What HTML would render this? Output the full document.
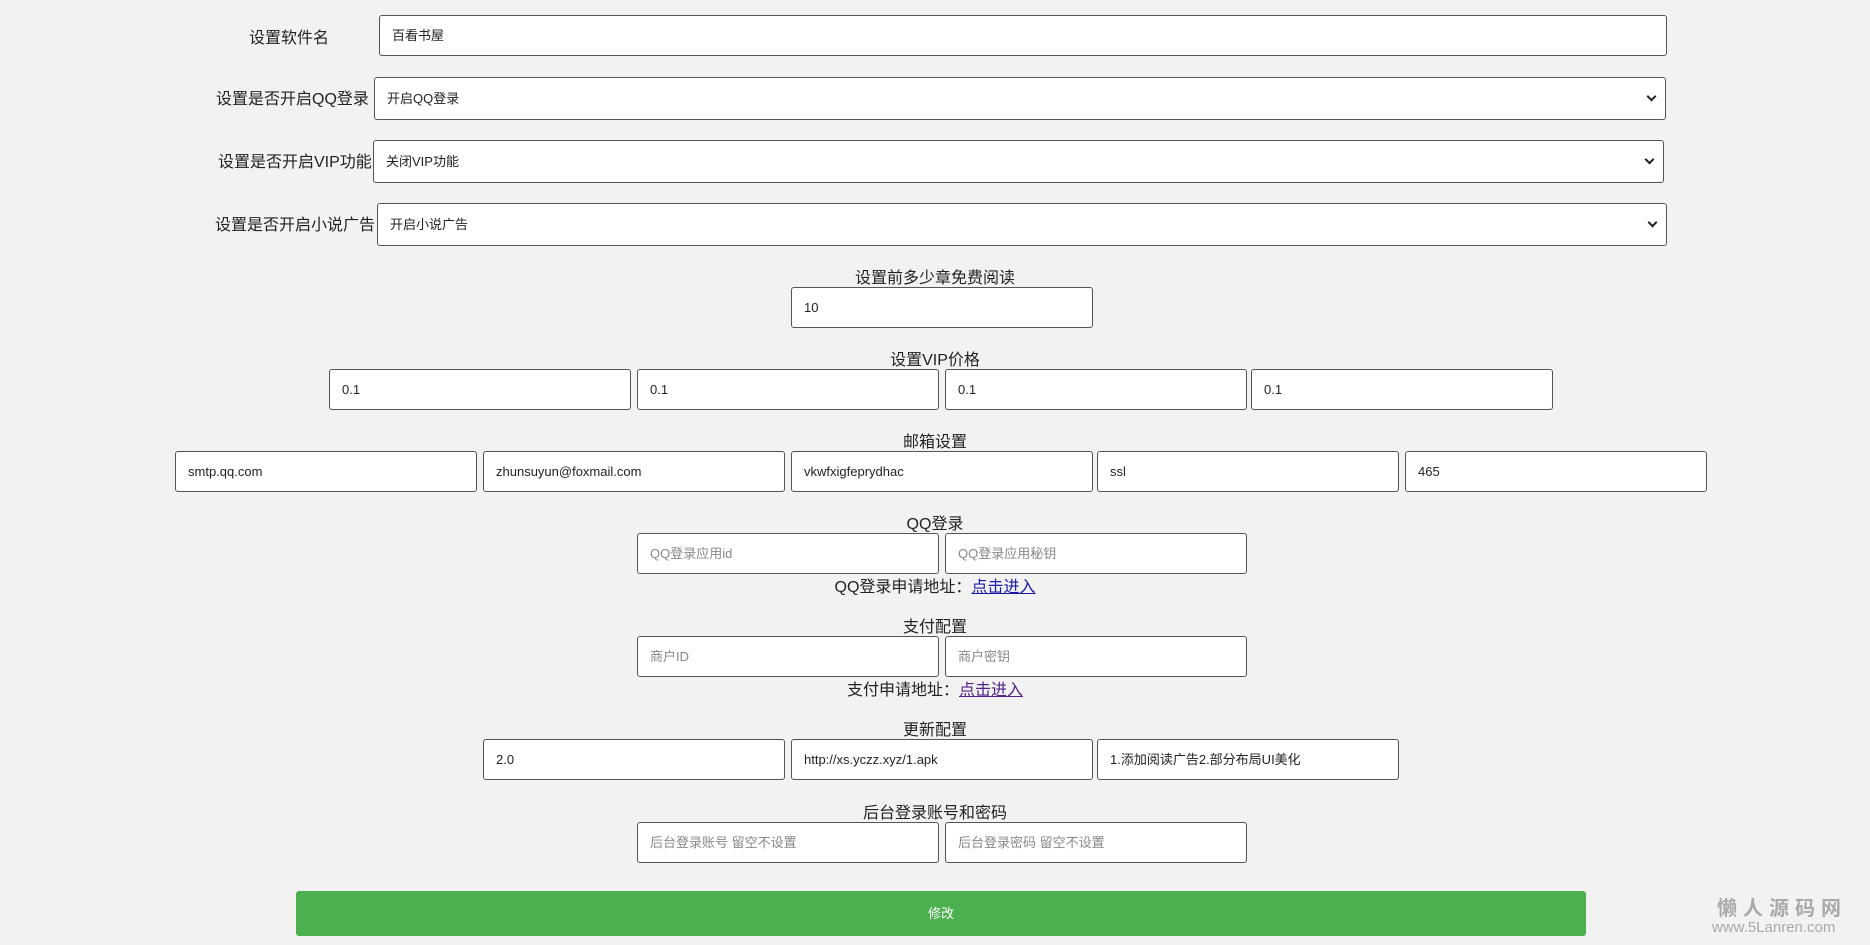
<!DOCTYPE html>
<html><head><meta charset="utf-8"><style>
body{margin:0;width:1870px;height:945px;background:#f2f2f2;font-family:"Liberation Sans","Noto Sans CJK SC",sans-serif;position:relative;overflow:hidden;color:#222}
.i{position:absolute;box-sizing:border-box;background:#fff;border:1px solid #555;border-radius:3px;height:41px;font-size:13px;padding-left:12px;line-height:39px;color:#222;width:302px}
.p{color:#888}
.l{position:absolute;font-size:16px;white-space:nowrap}
.h{position:absolute;left:0;width:1870px;text-align:center;font-size:16px}
.sel::after{content:"";position:absolute;right:10px;top:15px;width:5px;height:5px;border-right:2px solid #222;border-bottom:2px solid #222;transform:rotate(45deg)}
a{color:#1a1aa6;text-decoration:underline}
</style></head><body>
<div class="l" style="left:249px;top:24px">设置软件名</div>
<div class="i" style="left:379px;top:15px;width:1288px">百看书屋</div>
<div class="l" style="left:216px;top:85px">设置是否开启QQ登录</div>
<div class="i sel" style="left:374px;top:77px;width:1292px;height:43px;line-height:41px">开启QQ登录</div>
<div class="l" style="left:218px;top:148px">设置是否开启VIP功能</div>
<div class="i sel" style="left:373px;top:140px;width:1291px;height:43px;line-height:41px">关闭VIP功能</div>
<div class="l" style="left:215px;top:211px">设置是否开启小说广告</div>
<div class="i sel" style="left:377px;top:203px;width:1290px;height:43px;line-height:41px">开启小说广告</div>

<div class="h" style="top:264px">设置前多少章免费阅读</div>
<div class="i" style="left:791px;top:287px">10</div>

<div class="h" style="top:346px">设置VIP价格</div>
<div class="i" style="left:329px;top:369px">0.1</div>
<div class="i" style="left:637px;top:369px">0.1</div>
<div class="i" style="left:945px;top:369px">0.1</div>
<div class="i" style="left:1251px;top:369px">0.1</div>

<div class="h" style="top:428px">邮箱设置</div>
<div class="i" style="left:175px;top:451px">smtp.qq.com</div>
<div class="i" style="left:483px;top:451px">zhunsuyun@foxmail.com</div>
<div class="i" style="left:791px;top:451px">vkwfxigfeprydhac</div>
<div class="i" style="left:1097px;top:451px">ssl</div>
<div class="i" style="left:1405px;top:451px">465</div>

<div class="h" style="top:510px">QQ登录</div>
<div class="i p" style="left:637px;top:533px">QQ登录应用id</div>
<div class="i p" style="left:945px;top:533px">QQ登录应用秘钥</div>
<div class="h" style="top:573px">QQ登录申请地址：<a>点击进入</a></div>

<div class="h" style="top:613px">支付配置</div>
<div class="i p" style="left:637px;top:636px">商户ID</div>
<div class="i p" style="left:945px;top:636px">商户密钥</div>
<div class="h" style="top:676px">支付申请地址：<a style="color:#552288">点击进入</a></div>

<div class="h" style="top:716px">更新配置</div>
<div class="i" style="left:483px;top:739px">2.0</div>
<div class="i" style="left:791px;top:739px">http://xs.yczz.xyz/1.apk</div>
<div class="i" style="left:1097px;top:739px">1.添加阅读广告2.部分布局UI美化</div>

<div class="h" style="top:799px">后台登录账号和密码</div>
<div class="i p" style="left:637px;top:822px">后台登录账号 留空不设置</div>
<div class="i p" style="left:945px;top:822px">后台登录密码 留空不设置</div>

<div style="position:absolute;left:296px;top:891px;width:1290px;height:45px;background:#4caf50;border-radius:3px;color:#fff;font-size:13px;text-align:center;line-height:45px">修改</div>

<div style="position:absolute;left:1717px;top:892px;font-size:20px;font-weight:bold;color:#aaa;letter-spacing:6px">懒人源码网</div>
<div style="position:absolute;left:1712px;top:919px;font-size:15px;color:#aaa">www.5Lanren.com</div>
</body></html>
